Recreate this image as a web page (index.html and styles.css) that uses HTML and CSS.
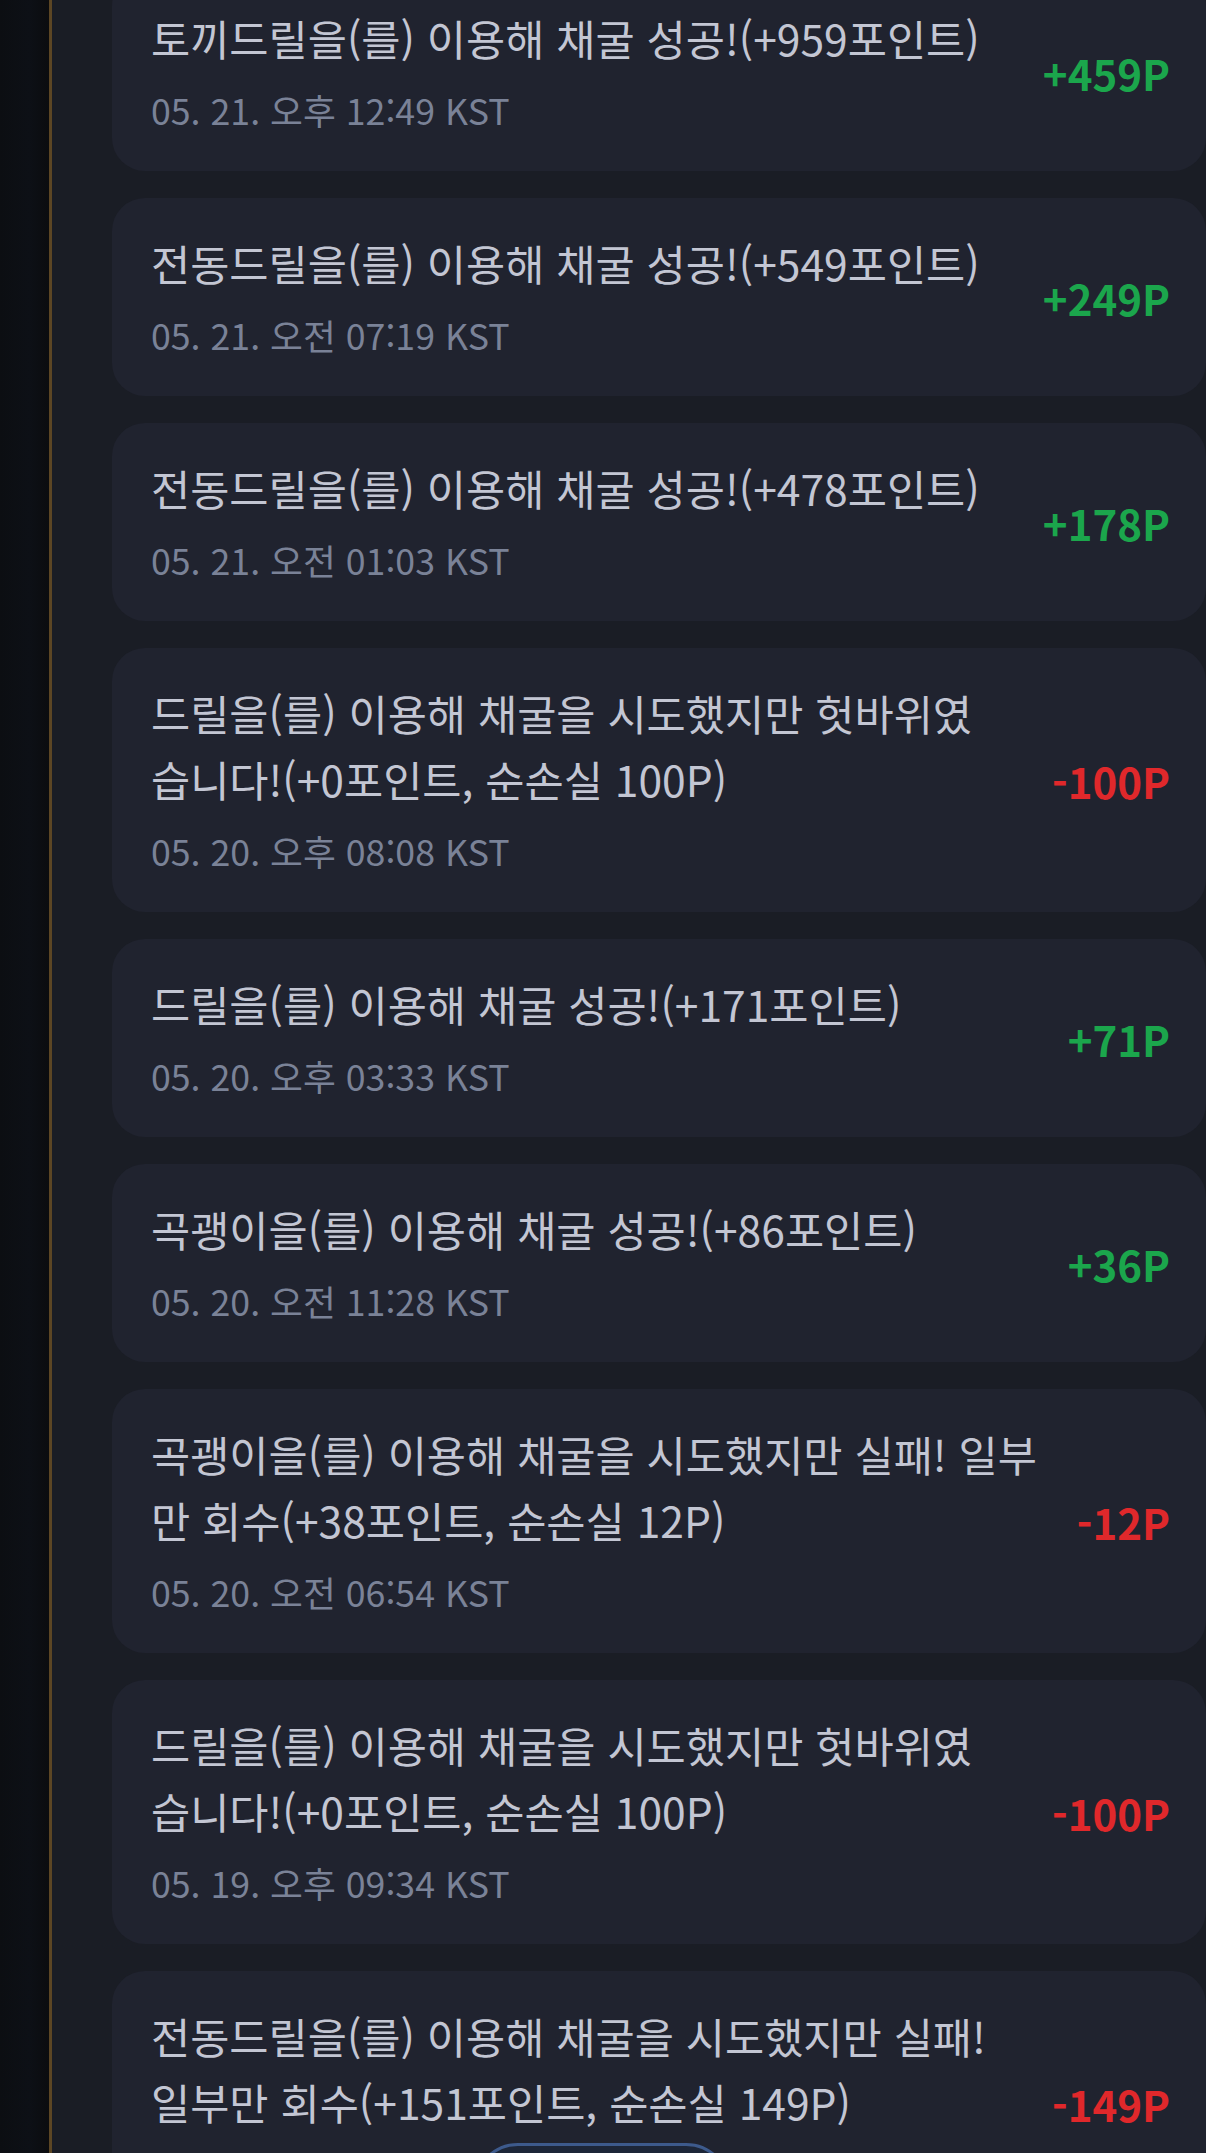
FILE: index.html
```html
<!DOCTYPE html>
<html lang="ko">
<head>
  <meta charset="UTF-8">
  <meta name="viewport" content="width=device-width, initial-scale=1.0">
  <title>채굴 기록</title>
  <link rel="stylesheet" href="styles.css">
</head>
<body>
  <div class="page">
    <div class="side"></div>
    <div class="main">
      <ul class="history">
        <li class="item">
          <div class="info">
            <div class="title">토끼드릴을(를) 이용해 채굴 성공!(+959포인트)</div>
            <div class="date">05. 21. 오후 12:49 KST</div>
          </div>
          <div class="amount plus">+459P</div>
        </li>
        <li class="item">
          <div class="info">
            <div class="title">전동드릴을(를) 이용해 채굴 성공!(+549포인트)</div>
            <div class="date">05. 21. 오전 07:19 KST</div>
          </div>
          <div class="amount plus">+249P</div>
        </li>
        <li class="item">
          <div class="info">
            <div class="title">전동드릴을(를) 이용해 채굴 성공!(+478포인트)</div>
            <div class="date">05. 21. 오전 01:03 KST</div>
          </div>
          <div class="amount plus">+178P</div>
        </li>
        <li class="item">
          <div class="info">
            <div class="title">드릴을(를) 이용해 채굴을 시도했지만 헛바위였<br>습니다!(+0포인트, 순손실 100P)</div>
            <div class="date">05. 20. 오후 08:08 KST</div>
          </div>
          <div class="amount minus">-100P</div>
        </li>
        <li class="item">
          <div class="info">
            <div class="title">드릴을(를) 이용해 채굴 성공!(+171포인트)</div>
            <div class="date">05. 20. 오후 03:33 KST</div>
          </div>
          <div class="amount plus">+71P</div>
        </li>
        <li class="item">
          <div class="info">
            <div class="title">곡괭이을(를) 이용해 채굴 성공!(+86포인트)</div>
            <div class="date">05. 20. 오전 11:28 KST</div>
          </div>
          <div class="amount plus">+36P</div>
        </li>
        <li class="item">
          <div class="info">
            <div class="title">곡괭이을(를) 이용해 채굴을 시도했지만 실패! 일부<br>만 회수(+38포인트, 순손실 12P)</div>
            <div class="date">05. 20. 오전 06:54 KST</div>
          </div>
          <div class="amount minus">-12P</div>
        </li>
        <li class="item">
          <div class="info">
            <div class="title">드릴을(를) 이용해 채굴을 시도했지만 헛바위였<br>습니다!(+0포인트, 순손실 100P)</div>
            <div class="date">05. 19. 오후 09:34 KST</div>
          </div>
          <div class="amount minus">-100P</div>
        </li>
        <li class="item">
          <div class="info">
            <div class="title">전동드릴을(를) 이용해 채굴을 시도했지만 실패!<br>일부만 회수(+151포인트, 순손실 149P)</div>
            <div class="date">05. 19. 오후 04:12 KST</div>
          </div>
          <div class="amount minus">-149P</div>
        </li>
      </ul>
    </div>
  </div>
  <div class="float-btn"></div>
</body>
</html>
```

FILE: styles.css
```css
html, body {
  margin: 0;
  padding: 0;
  height: 100%;
  overflow: hidden;
}

body {
  font-family: "Noto Sans CJK KR", "Noto Sans", sans-serif;
  background-color: #1a1d25;
}

.page {
  display: flex;
  min-height: 100vh;
}

.side {
  width: 49px;
  flex-shrink: 0;
  background: linear-gradient(to right, #0c0e12, #0d1016 60%, #0b0c0f);
  border-right: 3px solid #5c4624;
}

.main {
  flex: 1;
  padding-left: 60px;
}

.history {
  list-style: none;
  margin: -27px 0 0;
  padding: 0;
}

.item {
  display: flex;
  align-items: center;
  background-color: #20232f;
  border-radius: 33px;
  padding: 32px 36px 34px 39px;
  margin-bottom: 27px;
}

.info {
  flex: 1;
}

.title {
  color: #c3c6d3;
  font-size: 42.6px;
  line-height: 66px;
}

.date {
  color: #7a8297;
  font-size: 35.7px;
  line-height: 54px;
  margin-top: 12px;
}

.amount {
  font-size: 42px;
  font-weight: 700;
  padding-top: 3px;
  margin-left: 20px;
}

.plus {
  color: #1ba64c;
}

.minus {
  color: #e0282b;
}

/* floating pill, only its top edge is on screen */
.float-btn {
  position: fixed;
  left: 473px;
  top: 2143px;
  width: 258px;
  height: 90px;
  box-sizing: border-box;
  border-radius: 45px;
  border: 3px solid #3d5a8c;
  background-color: #1d2638;
}
```
